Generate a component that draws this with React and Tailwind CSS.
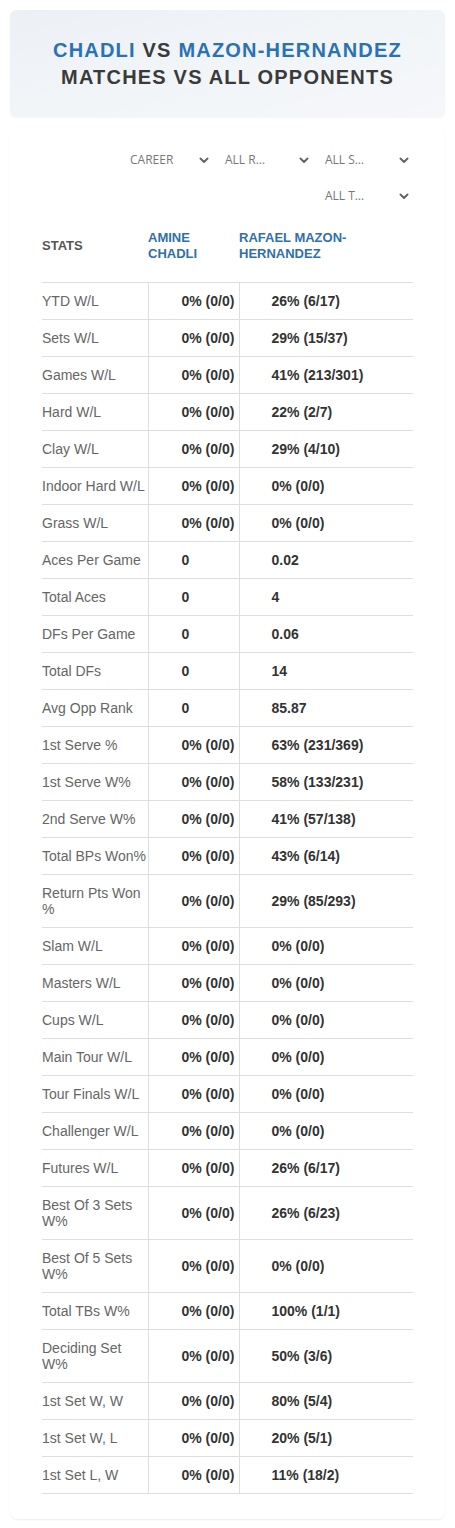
import React from "react";

const rows = [
  ["YTD W/L", "0% (0/0)", "26% (6/17)"],
  ["Sets W/L", "0% (0/0)", "29% (15/37)"],
  ["Games W/L", "0% (0/0)", "41% (213/301)"],
  ["Hard W/L", "0% (0/0)", "22% (2/7)"],
  ["Clay W/L", "0% (0/0)", "29% (4/10)"],
  ["Indoor Hard W/L", "0% (0/0)", "0% (0/0)"],
  ["Grass W/L", "0% (0/0)", "0% (0/0)"],
  ["Aces Per Game", "0", "0.02"],
  ["Total Aces", "0", "4"],
  ["DFs Per Game", "0", "0.06"],
  ["Total DFs", "0", "14"],
  ["Avg Opp Rank", "0", "85.87"],
  ["1st Serve %", "0% (0/0)", "63% (231/369)"],
  ["1st Serve W%", "0% (0/0)", "58% (133/231)"],
  ["2nd Serve W%", "0% (0/0)", "41% (57/138)"],
  ["Total BPs Won%", "0% (0/0)", "43% (6/14)"],
  ["Return Pts Won %", "0% (0/0)", "29% (85/293)"],
  ["Slam W/L", "0% (0/0)", "0% (0/0)"],
  ["Masters W/L", "0% (0/0)", "0% (0/0)"],
  ["Cups W/L", "0% (0/0)", "0% (0/0)"],
  ["Main Tour W/L", "0% (0/0)", "0% (0/0)"],
  ["Tour Finals W/L", "0% (0/0)", "0% (0/0)"],
  ["Challenger W/L", "0% (0/0)", "0% (0/0)"],
  ["Futures W/L", "0% (0/0)", "26% (6/17)"],
  ["Best Of 3 Sets W%", "0% (0/0)", "26% (6/23)"],
  ["Best Of 5 Sets W%", "0% (0/0)", "0% (0/0)"],
  ["Total TBs W%", "0% (0/0)", "100% (1/1)"],
  ["Deciding Set W%", "0% (0/0)", "50% (3/6)"],
  ["1st Set W, W", "0% (0/0)", "80% (5/4)"],
  ["1st Set W, L", "0% (0/0)", "20% (5/1)"],
  ["1st Set L, W", "0% (0/0)", "11% (18/2)"],
];

function Chevron() {
  return (
    <svg width="10" height="7" viewBox="0 0 10 7" className="shrink-0">
      <polyline
        points="1.5,1.5 5,5 8.5,1.5"
        fill="none"
        stroke="#666"
        strokeWidth="2"
        strokeLinecap="round"
        strokeLinejoin="round"
      />
    </svg>
  );
}

function FilterSelect({ label, width }) {
  return (
    <div className={`flex h-[36px] items-center justify-between pl-[12px] pr-[4px] ${width}`}>
      <span className="whitespace-nowrap font-['Open_Sans',sans-serif] text-[12px] text-[#777]">
        {label}
      </span>
      <Chevron />
    </div>
  );
}

export default function App() {
  return (
    <div className="min-h-screen bg-white px-[10px] pt-[10px] font-['Liberation_Sans',Arial,sans-serif]">
      {/* title card */}
      <div className="flex h-[107px] flex-col items-center justify-center rounded-md bg-gradient-to-br from-[#ecf0f5] via-[#f2f5f8] to-[#f5f7fa] shadow-[0_1px_2px_rgba(0,0,0,0.04)]">
        <h1 className="text-center font-['Liberation_Sans',Arial,sans-serif] text-[20px] font-bold uppercase leading-[27px] tracking-[1.2px] text-[#3a3a3a]">
          <span className="text-[#2a72b3]">Chadli</span> vs{" "}
          <span className="text-[#2a72b3]">Mazon-Hernandez</span>
          <br />
          Matches vs All Opponents
        </h1>
      </div>

      {/* stats card */}
      <div className="mt-[10px] rounded-lg bg-white px-[32px] pb-[25px] pt-[15px] shadow-[0_1px_2px_rgba(0,0,0,0.07)]">
        <div className="flex flex-wrap justify-end">
          <FilterSelect label="CAREER" width="w-[95px]" />
          <FilterSelect label="ALL R…" width="w-[100px]" />
          <FilterSelect label="ALL S…" width="w-[100px]" />
          <FilterSelect label="ALL T…" width="w-[100px]" />
        </div>

        <table className="w-full table-fixed border-collapse font-['Liberation_Sans',Arial,sans-serif]">
          <colgroup>
            <col className="w-[106px]" />
            <col className="w-[91px]" />
            <col />
          </colgroup>
          <thead>
            <tr className="text-left text-[13px] font-bold uppercase leading-[16px]">
              <th className="pb-[20px] pt-[16px] align-middle text-[#555]">Stats</th>
              <th className="pb-[20px] pt-[16px] align-middle text-[#2f70ab]">
                Amine Chadli
              </th>
              <th className="pb-[20px] pt-[16px] align-middle text-[#2f70ab]">
                Rafael Mazon-Hernandez
              </th>
            </tr>
          </thead>
          <tbody>
            {rows.map(([label, a, b]) => (
              <tr key={label} className="border-y border-[#dedede] text-[14px] leading-[16px]">
                <td className="py-[10px] align-middle text-[#666]">{label}</td>
                <td className="border-x border-[#dedede] py-[10px] pl-[33px] align-middle font-bold text-[#333]">
                  {a}
                </td>
                <td className="py-[10px] pl-[32px] align-middle font-bold text-[#333]">{b}</td>
              </tr>
            ))}
          </tbody>
        </table>
      </div>
    </div>
  );
}
